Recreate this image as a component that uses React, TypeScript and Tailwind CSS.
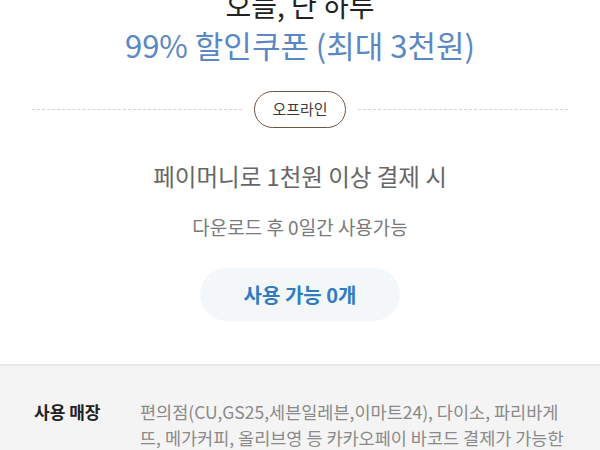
const font = { fontFamily: '"Noto Sans CJK KR", "Noto Sans", sans-serif' };

function CouponHead() {
  return (
    <section className="flex flex-col items-center bg-white pb-[43px]">
      <h1 className="-mt-[13px] text-[28px] leading-[36px] font-normal text-[#222]">오늘, 단 하루</h1>
      <p className="mt-[3px] text-[31px] leading-[38px] text-[#5b88c4]">99% 할인쿠폰 (최대 3천원)</p>

      <div className="mt-[27px] flex w-full items-center px-[32px]">
        <div className="h-0 flex-1 border-t border-dashed border-[#d4d4d4]" />
        <span className="mx-[12px] flex h-[37px] items-center rounded-full border-[1.5px] border-[#6f5641] px-[17px] text-[15px] text-[#3b3b3b]">
          오프라인
        </span>
        <div className="h-0 flex-1 border-t border-dashed border-[#d4d4d4]" />
      </div>

      <p className="mt-[33px] text-[23.5px] leading-[30px] text-[#666]">페이머니로 1천원 이상 결제 시</p>
      <p className="mt-[23px] text-[19px] leading-[26px] text-[#7a7a7a]">다운로드 후 0일간 사용가능</p>

      <button
        type="button"
        className="mt-[28px] flex h-[53px] w-[200px] items-center justify-center rounded-full bg-[#f4f7fa] text-[20px] font-bold text-[#2f7dc0]"
      >
        사용 가능 0개
      </button>
    </section>
  );
}

function StoreInfo() {
  return (
    <section className="flex border-t-2 border-[#e8e8e8] bg-[#f4f4f4] pt-[33px] pl-[34px] pr-[26px]">
      <div className="w-[106px] shrink-0 text-[17px] leading-[26px] font-bold text-[#222]">사용 매장</div>
      <p className="flex-1 text-[17.5px] leading-[26px] text-[#8a8a8a]">
        편의점(CU,GS25,세븐일레븐,이마트24), 다이소, 파리바게뜨, 메가커피, 올리브영 등 카카오페이 바코드 결제가 가능한 오프라인 매장 어디서든 사용 가능
      </p>
    </section>
  );
}

export default function App() {
  return (
    <div className="h-[450px] w-[600px] overflow-hidden bg-white" style={font}>
      <CouponHead />
      <StoreInfo />
    </div>
  );
}
